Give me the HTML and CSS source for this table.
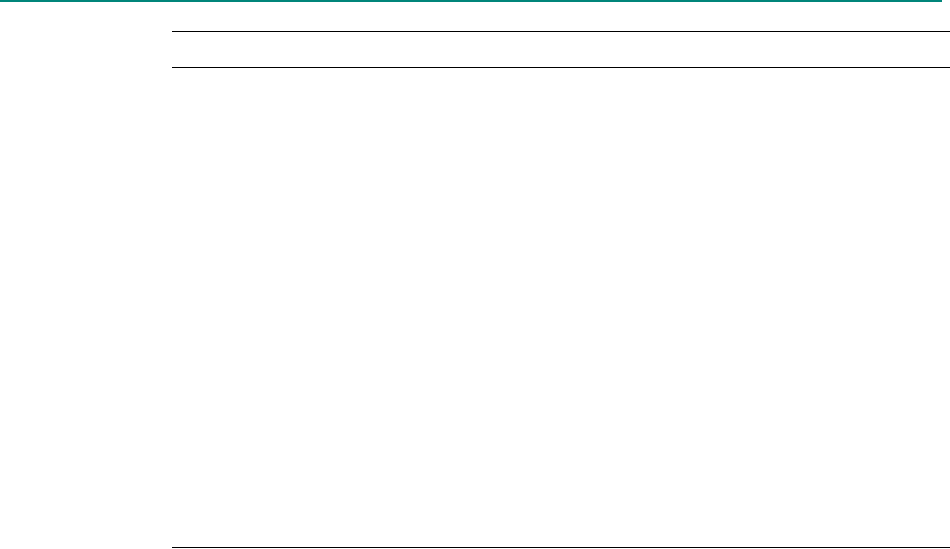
FILE: index.html
```html
<!DOCTYPE html>
<html>
<head>
<meta charset="utf-8">
<link rel="stylesheet" href="styles.css">
</head>
<body>
<div class="topbar"></div>
<main class="main">
  <section class="table">
    <div class="table-head"></div>
    <div class="table-body"></div>
  </section>
</main>
</body>
</html>
```

FILE: styles.css
```css
html, body {
  margin: 0;
  padding: 0;
  background: #ffffff;
  overflow: hidden;
  font-family: "Liberation Sans", Arial, sans-serif;
}
.topbar {
  width: 942px;
  height: 2px;
  background: #00857a;
}
.main {
  display: flex;
  padding: 29px 0 0 172px;
}
.table {
  flex: 1;
  display: flex;
  flex-direction: column;
}
.table-head {
  height: 35px;
  border-top: 1px solid #000;
  border-bottom: 1px solid #000;
}
.table-body {
  height: 479px;
  border-bottom: 1px solid #000;
}
```
